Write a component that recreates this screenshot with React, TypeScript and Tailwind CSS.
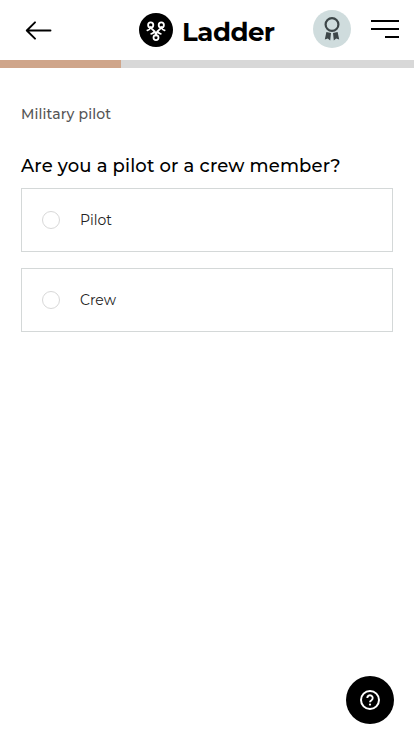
import { FC } from "react";

const options = ["Pilot", "Crew"];

const LogoMark: FC = () => {
    return (
        <svg className="size-[34px] shrink-0" viewBox="0 0 34 34" fill="none" stroke="#fff" strokeWidth="1.8" strokeLinecap="round">
            <circle cx="17" cy="17" r="17" fill="#000" stroke="none" />
            <circle cx="11.7" cy="11.9" r="2.6" />
            <circle cx="22.3" cy="11.9" r="2.6" />
            <circle cx="17" cy="24.6" r="2.5" />
            <path d="M8.4 17.4C9.6 17.2 10.8 16.2 11.7 14.6 12.8 16.6 15.8 17.2 16 19.4L17 21.8 18 19.4C18.2 17.2 21.2 16.6 22.3 14.6 23.2 16.2 24.4 17.2 25.6 17.4" />
            <path d="M12.2 20.8C13.4 20.8 14.6 20 15.6 18.6M21.8 20.8C20.6 20.8 19.4 20 18.4 18.6" />
        </svg>
    )
}

const Header: FC = () => {
    return (
        <header className="flex h-[60px] items-start pl-[25px] pr-[15px]">
            <button aria-label="Back" className="mt-[21px]">
                <svg className="h-[19px] w-[27px]" viewBox="0 0 27 19" fill="none" stroke="#000" strokeWidth="1.9" strokeLinecap="round" strokeLinejoin="round">
                    <path d="M25.5 9.5H2M10 1.3 1.8 9.5 10 17.7" />
                </svg>
            </button>
            <div className="ml-[87px] mt-[13px] flex h-[34px] w-[136px] items-center">
                <LogoMark />
                <span className="ml-[9px] mt-[3px] text-[26px] font-bold leading-none tracking-[-0.5px] text-black">Ladder</span>
            </div>
            <button aria-label="Badge" className="ml-[38px] mt-[10px]">
                <svg className="size-[38px]" viewBox="0 0 38 38" fill="none">
                    <circle cx="19" cy="19" r="19" fill="#cfdcdd" />
                    <circle cx="19" cy="14.5" r="6.4" stroke="#3d4648" strokeWidth="2.2" />
                    <path d="M13.4 22 18 23 17.2 30.4 14.8 28.6 11.8 29.4ZM24.6 22 20 23 20.8 30.4 23.2 28.6 26.2 29.4Z" fill="#3d4648" />
                </svg>
            </button>
            <button aria-label="Menu" className="ml-5 mt-5 flex w-7 flex-col items-end gap-1.5">
                <span className="h-0.5 w-7 bg-black" />
                <span className="h-0.5 w-7 bg-black" />
                <span className="h-0.5 w-3.5 bg-black" />
            </button>
        </header>
    )
}

export default function App() {
    return (
        <div className="flex min-h-screen flex-col bg-white font-['Montserrat','Inter',sans-serif]">
            <Header />
            <div className="h-2 w-full bg-[#d8d8d8]">
                <div className="h-2 w-[121px] bg-[#cfa58a]" />
            </div>
            <main className="flex flex-col px-[21px] pt-9">
                <div className="text-[14px] font-medium leading-5 tracking-[0.14px] text-[#555]">Military pilot</div>
                <h1 className="mt-[30px] whitespace-nowrap text-[18px] font-medium leading-6 tracking-[0.15px] text-black">Are you a pilot or a crew member?</h1>
                <div className="mt-[10px] flex flex-col gap-4">
                    {options.map((option) => (
                        <label key={option} className="flex h-16 items-center border border-[#d4d8d8] pl-5">
                            <span className="size-[18px] rounded-full border border-[#d8d8d8]" />
                            <span className="ml-5 text-[14px] leading-5 text-[#222]">{option}</span>
                        </label>
                    ))}
                </div>
            </main>
            <button aria-label="Help" className="fixed bottom-3 right-5 flex size-12 items-center justify-center rounded-full bg-black">
                <svg className="size-5" viewBox="0 0 20 20" fill="none" stroke="#fff" strokeWidth="2">
                    <circle cx="10" cy="10" r="9" />
                    <path d="M7.3 8a2.7 2.7 0 1 1 4.2 2.2C10.5 10.8 10 11.2 10 12.3" strokeWidth="1.9" />
                    <circle cx="10" cy="14.6" r="1.1" fill="#fff" stroke="none" />
                </svg>
            </button>
        </div>
    )
}
